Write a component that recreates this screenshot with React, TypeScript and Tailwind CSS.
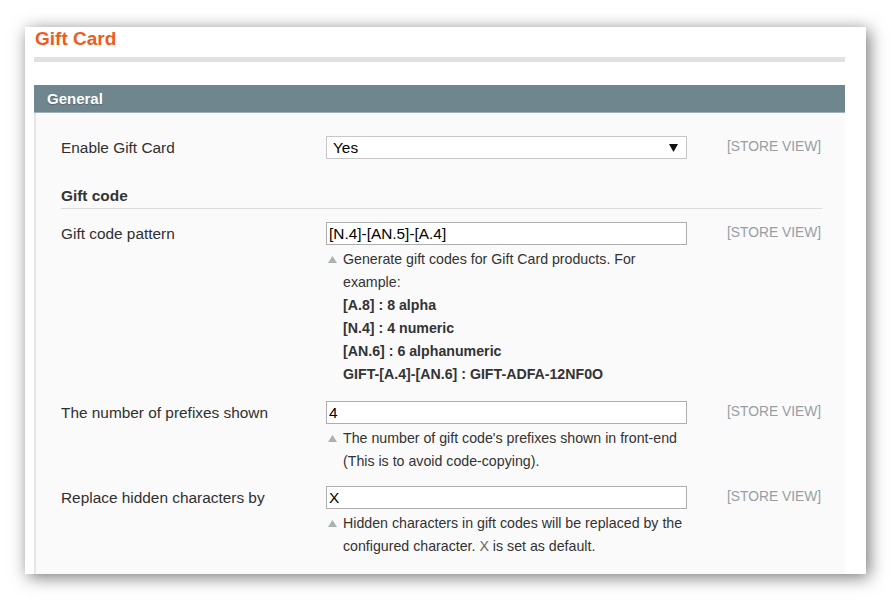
import type { ReactNode } from "react";

function Scope() {
  return (
    <div className="ml-[40px] h-[23px] flex items-center text-[13.8px] text-[#979fa3]">
      [STORE VIEW]
    </div>
  );
}

function Row({ label, children }: { label: string; children: ReactNode }) {
  return (
    <div className="flex items-start">
      <div className="w-[265px] h-[23px] pt-[1px] flex items-center text-[15.4px] text-[#303030]">{label}</div>
      <div className="w-[361px]">{children}</div>
      <Scope />
    </div>
  );
}

function TextInput({ value }: { value: string }) {
  return (
    <div className="h-[23px] bg-white border border-[#adadad] pl-[2px] pt-[1px] flex items-center text-[15.4px] text-black">
      {value}
    </div>
  );
}

function Note({ children }: { children: ReactNode }) {
  return (
    <div className="flex mt-[3px] text-[14.2px] leading-[23px] text-[#333]">
      <div className="w-[17px] shrink-0 pl-[2px] pt-[8px]">
        <svg width="9" height="7" viewBox="0 0 9 7">
          <path d="M4.5 0 L9 7 L0 7 Z" fill="#a9b1b4" />
        </svg>
      </div>
      <div className="flex-1">{children}</div>
    </div>
  );
}

export default function App() {
  return (
    <div className="w-[891px] h-[600px] bg-white pt-[27px] pl-[25px] font-['Liberation_Sans',Arial,sans-serif]">
      <div className="w-[841px] h-[547px] bg-white pl-[9px] pr-[21px] shadow-[3px_3px_16px_rgba(0,0,0,0.55)]">
        {/* Title */}
        <div className="h-[24px] pl-[1px] text-[19px] leading-[24px] font-bold text-[#ef5b1c]">Gift Card</div>
        <div className="mt-[6px] h-[5px] bg-[#e1e1e1]" />

        {/* Section header */}
        <div className="mt-[23px] h-[28px] bg-[#6f868f] border-b border-[#9fb0b6] pl-[13px] pt-[1px] flex items-center text-[15px] font-bold text-white [text-shadow:0_1px_1px_rgba(0,0,0,0.25)]">
          General
        </div>

        {/* Section body */}
        <div className="h-[461px] bg-[#fafafa] border-l-2 border-[#e6e6e6] pl-[25px] pr-[23px] pt-[23px]">
          <Row label="Enable Gift Card">
            <div className="h-[23px] bg-white border border-[#c6c6c6] pl-[6px] pr-[8px] flex items-center justify-between text-[15.4px] text-black">
              <span>Yes</span>
              <svg width="9" height="9" viewBox="0 0 9 9">
                <path d="M0 1 L9 1 L4.5 9 Z" fill="#111" />
              </svg>
            </div>
          </Row>

          <div className="mt-[28px] pb-[3px] border-b border-[#dcdcdc] text-[15.4px] leading-[18px] font-bold text-[#333]">
            Gift code
          </div>

          <div className="mt-[13px]">
            <Row label="Gift code pattern">
              <TextInput value="[N.4]-[AN.5]-[A.4]" />
              <Note>
                <div>Generate gift codes for Gift Card products. For example:</div>
                <div className="font-bold">[A.8] : 8 alpha</div>
                <div className="font-bold">[N.4] : 4 numeric</div>
                <div className="font-bold">[AN.6] : 6 alphanumeric</div>
                <div className="font-bold">GIFT-[A.4]-[AN.6] : GIFT-ADFA-12NF0O</div>
              </Note>
            </Row>
          </div>

          <div className="mt-[15px]">
            <Row label="The number of prefixes shown">
              <TextInput value="4" />
              <Note>The number of gift code's prefixes shown in front-end (This is to avoid code-copying).</Note>
            </Row>
          </div>

          <div className="mt-[13px]">
            <Row label="Replace hidden characters by">
              <TextInput value="X" />
              <Note>
                <div>Hidden characters in gift codes will be replaced by the</div>
                <div>
                  configured character. <span className="text-[#666]">X</span> is set as default.
                </div>
              </Note>
            </Row>
          </div>
        </div>
      </div>
    </div>
  );
}
